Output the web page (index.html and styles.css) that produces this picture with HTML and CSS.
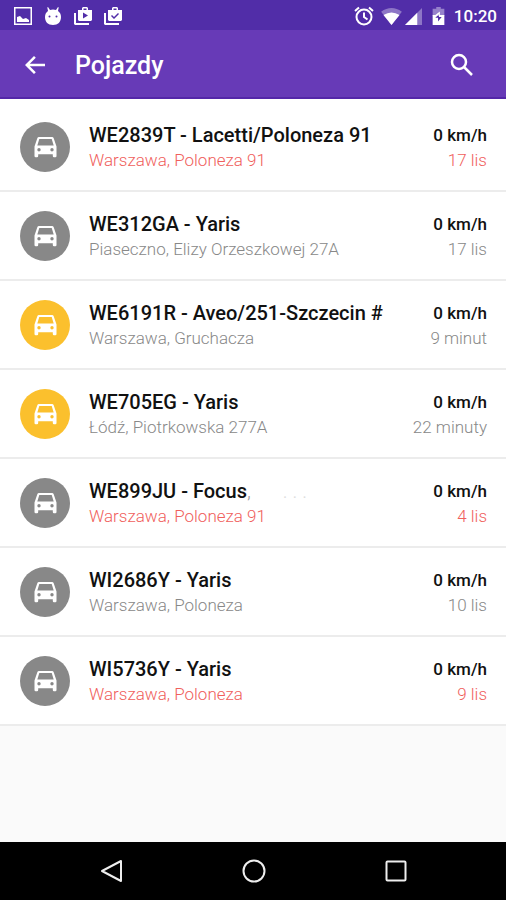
FILE: index.html
```html
<!DOCTYPE html>
<html lang="pl">
<head>
<meta charset="utf-8">
<meta name="viewport" content="width=device-width, initial-scale=1">
<title>Pojazdy</title>
<link rel="stylesheet" href="styles.css">
</head>
<body>
<svg class="defs" aria-hidden="true">
  <symbol id="car" viewBox="0 0 24 22"><path fill-rule="evenodd" d="M5.500 1h13q1.300 0 1.700 1.200L23 10.500V20q0 1.200-1.200 1.200h-1.300q-1.200 0-1.200-1.200v-1.700H4.700V20q0 1.200-1.200 1.200H2.200Q1 21.200 1 20v-9.500L3.800 2.200Q4.200 1 5.500 1zM5.800 3L3.800 9.500h16.400L18.200 3zM5.500 12a1.700 1.700 0 1 0 0 3.400 1.700 1.700 0 0 0 0-3.400zm13 0a1.700 1.700 0 1 0 0 3.400 1.700 1.700 0 0 0 0-3.400z"/></symbol>
</svg>
<div class="status">
  <div class="notices">
    <svg viewBox="0 0 18 18"><path fill-rule="evenodd" d="M0 0h18v18H0zM1.500 1.500v15h15v-15z"/><path d="M3 15v-5l3-1 3 3 3-1 3 2v2z"/></svg>
    <svg viewBox="0 0 18 18"><path fill-rule="evenodd" d="M4 0l2 3q3-1 6 0l2-3 .7.5L14 4q3 2 3 6c0 5-3 8-8 8s-8-3-8-8q0-4 3-6L3.300.5zM5.500 8.500a1 1 0 1 0 0 2 1 1 0 0 0 0-2zm7 0a1 1 0 1 0 0 2 1 1 0 0 0 0-2z"/></svg>
    <svg viewBox="0 0 18 18"><path fill-rule="evenodd" d="M4 3h4V1l1-1h4l1 1v2h4v10l-1 1H5l-1-1zM9.500 1.500V3h3V1.500zM9 5.500v6l5-3z"/><path d="M0 6h2v10h13v2H1l-1-1z"/></svg>
    <svg viewBox="0 0 18 18"><path fill-rule="evenodd" d="M4 3h4V1l1-1h4l1 1v2h4v10l-1 1H5l-1-1zM9.500 1.500V3h3V1.500zM8 8L7 9l3 3 5-5-1-1-4 4z"/><path d="M0 6h2v10h13v2H1l-1-1z"/></svg>
  </div>
  <div class="system">
    <svg class="alarm" viewBox="0 0 20 20"><g fill="none" stroke="#fff" stroke-width="2"><circle cx="10" cy="11" r="7.500"/><path d="M1 5l4-3.500M19 5l-4-3.500M10 6.500V11l3.500 2.500"/></g></svg>
    <svg class="wifi" viewBox="0 0 22 18"><path opacity=".35" d="M0 4Q11-4 22 4L11 18z"/><path d="M2.500 7.500Q11 2 19.500 7.500L11 18z"/></svg>
    <svg class="signal" viewBox="0 0 18 18"><path opacity=".35" d="M18 0v18H0z"/><path d="M13 5v13H0z"/></svg>
    <svg class="battery" viewBox="0 0 13 20"><path opacity=".4" d="M4 0h5v2h4v8H0V2h4z"/><path fill-rule="evenodd" d="M0 9h3l5-4v4h5v11H0zM7 8l-4 4h3v4l4-5H7z"/></svg>
    <span class="time">10:20</span>
  </div>
</div>
<header class="bar">
  <button class="icon" type="button" aria-label="Wstecz"><svg viewBox="0 0 24 24"><path d="M22 10.700H6.800l6-6L11 3l-9 9 9 9 1.800-1.700-6-6H22z"/></svg></button>
  <h1>Pojazdy</h1>
  <button class="icon" type="button" aria-label="Szukaj"><svg viewBox="0 0 24 24"><g fill="none" stroke="#fff" stroke-width="2.500"><circle cx="9" cy="9" r="7"/><path d="M14 14l8 8"/></g></svg></button>
</header>
<main>
<ul class="list">
  <li class="row late"><span class="badge"><svg><use href="#car"/></svg></span><div class="info"><h2>WE2839T - Lacetti/Poloneza 91</h2><p>Warszawa, Poloneza 91</p></div><div class="state"><b>0 km/h</b><p>17 lis</p></div></li>
  <li class="row"><span class="badge"><svg><use href="#car"/></svg></span><div class="info"><h2>WE312GA - Yaris</h2><p>Piaseczno, Elizy Orzeszkowej 27A</p></div><div class="state"><b>0 km/h</b><p>17 lis</p></div></li>
  <li class="row recent"><span class="badge"><svg><use href="#car"/></svg></span><div class="info"><h2>WE6191R - Aveo/251-Szczecin #</h2><p>Warszawa, Gruchacza</p></div><div class="state"><b>0 km/h</b><p>9 minut</p></div></li>
  <li class="row recent"><span class="badge"><svg><use href="#car"/></svg></span><div class="info"><h2>WE705EG - Yaris</h2><p>Łódź, Piotrkowska 277A</p></div><div class="state"><b>0 km/h</b><p>22 minuty</p></div></li>
  <li class="row late"><span class="badge"><svg><use href="#car"/></svg></span><div class="info"><h2>WE899JU - Focus<span class="mark">,</span><span class="dots">. . .</span></h2><p>Warszawa, Poloneza 91</p></div><div class="state"><b>0 km/h</b><p>4 lis</p></div></li>
  <li class="row"><span class="badge"><svg><use href="#car"/></svg></span><div class="info"><h2>WI2686Y - Yaris</h2><p>Warszawa, Poloneza</p></div><div class="state"><b>0 km/h</b><p>10 lis</p></div></li>
  <li class="row late"><span class="badge"><svg><use href="#car"/></svg></span><div class="info"><h2>WI5736Y - Yaris</h2><p>Warszawa, Poloneza</p></div><div class="state"><b>0 km/h</b><p>9 lis</p></div></li>
</ul>
</main>
<nav class="nav">
  <button type="button" aria-label="Wstecz"><svg viewBox="0 0 24 24"><path d="M21 2v20L2 12z"/></svg></button>
  <button type="button" aria-label="Ekran główny"><svg viewBox="0 0 24 24"><circle cx="12" cy="12" r="10.500"/></svg></button>
  <button type="button" aria-label="Ostatnie"><svg viewBox="0 0 24 24"><rect x="2.500" y="2.500" width="19" height="19" rx="1"/></svg></button>
</nav>
</body>
</html>
```
FILE: styles.css
```css
* { box-sizing: border-box; }
body {
  margin: 0;
  min-height: 100vh;
  display: flex;
  flex-direction: column;
  background: #fafafa;
  font-family: Roboto, "Liberation Sans", sans-serif;
  color: #111;
}
h1, h2, p, ul { margin: 0; padding: 0; }
svg { display: block; fill: #fff; }
button { padding: 0; border: 0; background: none; }
.defs { position: absolute; width: 0; height: 0; }

.status {
  display: flex;
  justify-content: space-between;
  align-items: center;
  height: 30px;
  padding: 2px 9px 0 14px;
  background: #512da8;
  color: #fff;
}
.notices { display: flex; gap: 12px; }
.notices svg { width: 18px; height: 18px; }
.system { display: flex; align-items: center; }
.alarm { width: 20px; height: 20px; margin-right: 7px; }
.wifi { width: 21px; height: 17px; margin-right: 3px; }
.signal { width: 17px; height: 17px; margin-right: 10px; }
.battery { width: 13px; height: 18px; margin-right: 9px; }
.time { font-size: 17px; line-height: 24px; font-weight: 500; }

.bar {
  display: flex;
  align-items: center;
  height: 69px;
  padding: 2px 32px 0 23px;
  background: #673ab7;
  border-bottom: 2px solid #5427a8;
  color: #fff;
}
.bar h1 { flex: 1; margin-left: 28px; padding-top: 2px; font-size: 25px; line-height: 32px; font-weight: 500; }
.icon svg { width: 24px; height: 24px; }

main { flex: 1; }
.list { padding-top: 4px; list-style: none; background: #fff; }
.row {
  display: flex;
  align-items: center;
  height: 89px;
  padding: 0 19px 0 20px;
  border-bottom: 2px solid #ececec;
}
.badge {
  display: grid;
  place-items: center;
  width: 50px;
  height: 50px;
  margin-right: 19px;
  border-radius: 50%;
  background: #888;
}
.badge svg { width: 25px; height: 22px; }
.recent .badge { background: #fbc02d; }
.info { flex: 1; }
.row h2 { font-size: 20px; line-height: 26px; font-weight: 500; }
.row p { font-size: 17px; line-height: 24px; font-weight: 300; color: #888; }
.late p { color: #f0605c; }
.state { text-align: right; }
.state b { display: block; font-size: 17px; line-height: 26px; font-weight: 500; }
.mark { font-weight: 300; color: #999; }
.dots { margin-left: 32px; font-weight: 300; color: #ddd; }

.nav {
  display: flex;
  justify-content: space-between;
  align-items: center;
  height: 58px;
  padding: 0 98px 0 100px;
  background: #000;
}
.nav svg { width: 24px; height: 24px; fill: none; stroke: #eee; stroke-width: 2; stroke-linejoin: round; }
```
